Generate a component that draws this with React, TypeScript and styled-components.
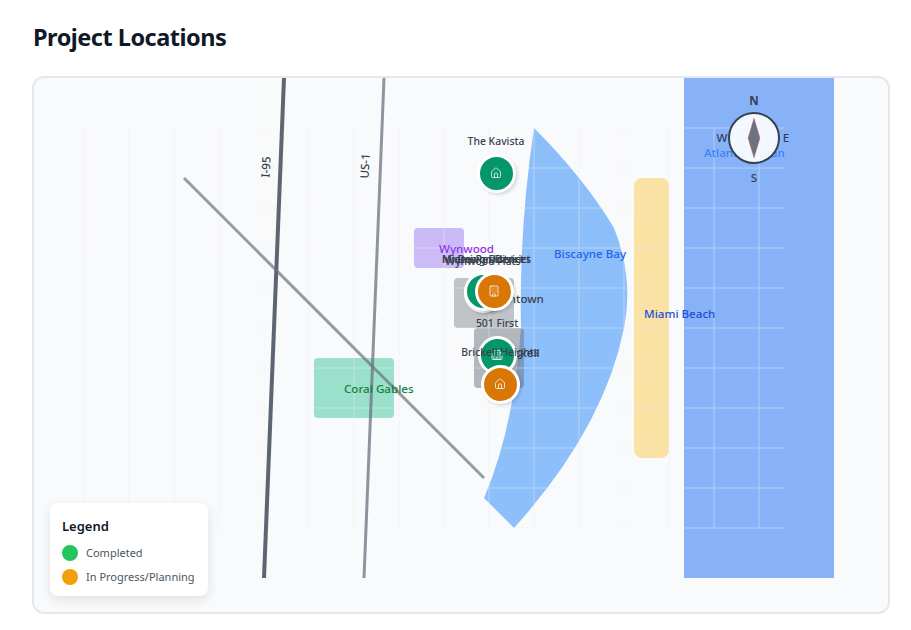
import React from "react";
import styled, { createGlobalStyle } from "styled-components";
import { Home, Building2, Building } from "lucide-react";

const Global = createGlobalStyle`
  html, body { margin: 0; padding: 0; background: #fff; }
  body { font-family: "Noto Sans", sans-serif; }
`;
const Page = styled.div`
  width: 911px;
  height: 630px;
  box-sizing: border-box;
  padding: 21px 21px 16px 32px;
  display: flex;
  flex-direction: column;
  overflow: hidden;
`;
const Title = styled.h2`
  margin: 0 0 23px;
  padding-left: 1px;
  font: 700 23.5px/32px "Noto Sans", sans-serif;
  letter-spacing: -0.5px;
  color: #111827;
`;
const MapFrame = styled.div`
  position: relative;
  flex: 1;
  border: 2px solid #e5e7eb;
  border-radius: 12px;
  background: #f9fafb;
  overflow: hidden;
`;
const MapSvg = styled.svg`
  display: block;
  width: 800px;
  height: 500px;
  overflow: visible;
`;
const MapText = styled.text<{ $c: string; $w?: number }>`
  font: ${(p) => p.$w ?? 500} 11.6px "Noto Sans", sans-serif;
  fill: ${(p) => p.$c};
  dominant-baseline: middle;
`;
const MarkerSpot = styled.div<{ $x: number; $y: number }>`
  position: absolute;
  left: ${(p) => p.$x}px;
  top: ${(p) => p.$y}px;
  width: 0;
  height: 0;
`;
const MarkerDot = styled.div<{ $c: string }>`
  position: absolute;
  left: -19.5px;
  top: -19.5px;
  width: 33px;
  height: 33px;
  border: 3px solid #fff;
  border-radius: 50%;
  background: ${(p) => p.$c};
  box-shadow: 2px 2px 3px rgba(0, 0, 0, 0.12);
  display: flex;
  align-items: center;
  justify-content: center;
  color: #fff;
`;
const MarkerLabel = styled.div`
  position: absolute;
  bottom: 25px;
  left: 0;
  transform: translateX(-50%);
  white-space: nowrap;
  font: 500 10.4px/14px "Noto Sans", sans-serif;
  color: #374151;
`;
const Legend = styled.div`
  position: absolute;
  left: 16px;
  bottom: 16px;
  width: 158px;
  height: 93px;
  box-sizing: border-box;
  padding: 14px 12px;
  background: #fff;
  border-radius: 8px;
  box-shadow: 0 4px 12px rgba(0, 0, 0, 0.1);
`;
const LegendTitle = styled.div`
  font: 600 13px/18px "Noto Sans", sans-serif;
  color: #111827;
  margin-bottom: 6px;
`;
const LegendRow = styled.div`
  display: flex;
  align-items: center;
  gap: 8px;
  height: 24px;
  white-space: nowrap;
  font: 400 11px/16px "Noto Sans", sans-serif;
  color: #4b5563;
`;
const LegendDot = styled.span<{ $c: string }>`
  flex: none;
  width: 16px;
  height: 16px;
  border-radius: 50%;
  background: ${(p) => p.$c};
`;

const xs = Array.from({ length: 16 }, (_, i) => 50 + i * 45);
const ys = Array.from({ length: 11 }, (_, i) => 50 + i * 40);

const regions = [
  { x: 280, y: 280, w: 80, h: 60, f: "#10b981", o: 0.4 },
  { x: 380, y: 150, w: 50, h: 40, f: "#8b5cf6", o: 0.4 },
  { x: 420, y: 200, w: 60, h: 50, f: "#6b7280", o: 0.4 },
  { x: 440, y: 250, w: 50, h: 60, f: "#6b7280", o: 0.5 },
];
const mapLabels = [
  { x: 310, y: 312, t: "Coral Gables", c: "#15803d" },
  { x: 405, y: 172, t: "Wynwood", c: "#9333ea" },
  { x: 450, y: 222, t: "Downtown", c: "#374151" },
  { x: 465, y: 276, t: "Brickell", c: "#374151" },
  { x: 520, y: 177, t: "Biscayne Bay", c: "#2563eb" },
  { x: 610, y: 237, t: "Miami Beach", c: "#1d4ed8" },
  { x: 670, y: 76, t: "Atlantic Ocean", c: "#3b82f6" },
];
const markers = [
  { x: 462, y: 95, c: "#059669", l: "The Kavista", i: Home },
  { x: 449, y: 215, c: "#059669", l: "Wynwood Flats", i: Building2 },
  { x: 452.5, y: 213, c: "#059669", l: "Miami Residences", i: Building2 },
  { x: 449, y: 213, c: "#059669", l: "Midtown District", i: Building2 },
  { x: 460, y: 213, c: "#d97706", l: "Design District", i: Building },
  { x: 463, y: 277, c: "#059669", l: "501 First", i: Building2 },
  { x: 466, y: 306, c: "#d97706", l: "Brickell Heights", i: Home },
];

export default function App() {
  return (
    <Page>
      <Global />
      <Title>Project Locations</Title>
      <MapFrame>
        <MapSvg viewBox="0 0 800 500">
          <rect x={650} y={0} width={150} height={500} fill="#3b82f6" opacity={0.6} />
          <path
            d="M500 50 Q550 100 580 150 Q600 200 590 250 Q570 350 480 450 L450 420 Q480 350 487 250 Q485 150 500 50 Z"
            fill="#60a5fa"
            opacity={0.7}
          />
          <rect x={600} y={100} width={35} height={280} rx={8} fill="#fbbf24" opacity={0.4} />
          {regions.map((r) => (
            <rect key={r.x} x={r.x} y={r.y} width={r.w} height={r.h} rx={4} fill={r.f} opacity={r.o} />
          ))}
          <g stroke="#eceef1" strokeWidth={1} opacity={0.45}>
            {xs.map((x) => (
              <line key={x} x1={x} y1={50} x2={x} y2={450} />
            ))}
            {ys.map((y) => (
              <line key={y} x1={50} y1={y} x2={750} y2={y} />
            ))}
          </g>
          <line x1={250} y1={0} x2={230} y2={500} stroke="#374151" strokeWidth={4} opacity={0.8} />
          <line x1={350} y1={0} x2={330} y2={500} stroke="#6b7280" strokeWidth={3} opacity={0.75} />
          <line x1={150} y1={100} x2={450} y2={400} stroke="#6b7280" strokeWidth={3} opacity={0.7} />
          <MapText $c="#374151" x={233} y={89} textAnchor="middle" transform="rotate(-87 233 89)">I-95</MapText>
          <MapText $c="#374151" x={332} y={88} textAnchor="middle" transform="rotate(-87 332 88)">US-1</MapText>
          {mapLabels.map((l) => (
            <MapText key={l.t} $c={l.c} x={l.x} y={l.y}>{l.t}</MapText>
          ))}
          <circle cx={720} cy={60} r={25} fill="#fff" fillOpacity={0.9} stroke="#374151" strokeWidth={2} />
          <polygon points="720,40 726,60 720,80 714,60" fill="#6b7280" stroke="#ef4444" strokeWidth={0.3} />
          <MapText $c="#374151" $w={700} x={720} y={24} textAnchor="middle">N</MapText>
          <MapText $c="#374151" x={720} y={101} textAnchor="middle">S</MapText>
          <MapText $c="#374151" x={752} y={61} textAnchor="middle">E</MapText>
          <MapText $c="#374151" x={688} y={61} textAnchor="middle">W</MapText>
        </MapSvg>
        {markers.map((m) => (
          <MarkerSpot key={m.l} $x={m.x} $y={m.y}>
            <MarkerLabel>{m.l}</MarkerLabel>
            <MarkerDot $c={m.c}>
              <m.i size={12} strokeWidth={1.5} />
            </MarkerDot>
          </MarkerSpot>
        ))}
        <Legend>
          <LegendTitle>Legend</LegendTitle>
          <LegendRow><LegendDot $c="#22c55e" />Completed</LegendRow>
          <LegendRow><LegendDot $c="#f59e0b" />In Progress/Planning</LegendRow>
        </Legend>
      </MapFrame>
    </Page>
  );
}
